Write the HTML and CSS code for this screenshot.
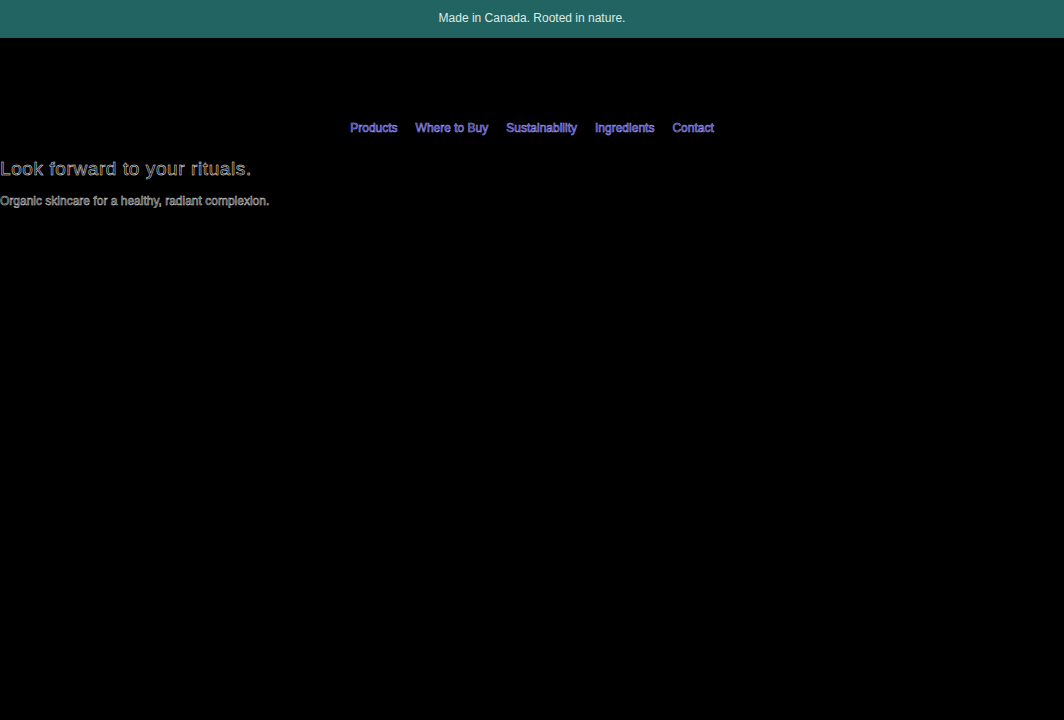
FILE: index.html
```html
<!DOCTYPE html>
<html>
<head>
<meta charset="utf-8">
<link rel="stylesheet" href="styles.css">
</head>
<body>
<div class="topbar">Made in Canada. Rooted in nature.</div>
<nav class="nav">
  <a href="#">Products</a>
  <a href="#">Where to Buy</a>
  <a href="#">Sustainability</a>
  <a href="#">Ingredients</a>
  <a href="#">Contact</a>
</nav>
<section class="hero">
  <h1 class="headline">Look forward to your rituals.</h1>
  <p class="sub">Organic skincare for a healthy, radiant complexion.</p>
</section>
</body>
</html>
```
FILE: styles.css
```css
html, body {
  margin: 0;
  padding: 0;
  background: #000;
  font-family: "Liberation Sans", Arial, sans-serif;
}
.topbar {
  height: 38px;
  box-sizing: border-box;
  padding-bottom: 2px;
  background: #226461;
  color: #dcebe6;
  font-size: 12px;
  display: flex;
  align-items: center;
  justify-content: center;
}
.nav {
  display: flex;
  justify-content: center;
  gap: 18px;
  padding-top: 83px;
  font-size: 12px;
}
.nav a {
  color: #14143a;
  -webkit-text-stroke: 0.6px #9a96ff;
  text-decoration: none;
}
.hero {
  padding-top: 23px;
}
.headline {
  margin: 0;
  font-size: 19px;
  font-weight: normal;
  color: transparent;
  -webkit-text-stroke: 0.5px #e8e8e8;
  letter-spacing: 0.6px;
}
.sub {
  margin: 14px 0 0 0;
  font-size: 12px;
  color: transparent;
  -webkit-text-stroke: 0.5px #d4d4d4;
  letter-spacing: 0;
}
```
